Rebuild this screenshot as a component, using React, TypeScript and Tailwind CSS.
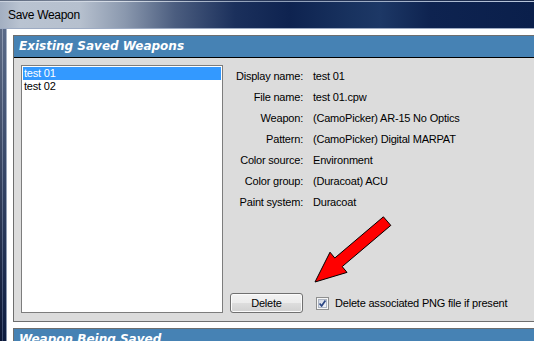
const rows: [string, string][] = [
  ["Display name:", "test 01"],
  ["File name:", "test 01.cpw"],
  ["Weapon:", "(CamoPicker) AR-15 No Optics"],
  ["Pattern:", "(CamoPicker) Digital MARPAT"],
  ["Color source:", "Environment"],
  ["Color group:", "(Duracoat) ACU"],
  ["Paint system:", "Duracoat"],
];

function CheckBox() {
  return (
    <svg width="13" height="13" viewBox="0 0 13 13" className="shrink-0">
      <defs>
        <linearGradient id="cbg" x1="0" y1="0" x2="1" y2="1">
          <stop offset="0" stopColor="#cfd6e2" />
          <stop offset="1" stopColor="#f4f6fa" />
        </linearGradient>
      </defs>
      <rect x="0.5" y="0.5" width="12" height="12" fill="#f6f6f6" stroke="#8e8f8f" />
      <rect x="2.5" y="2.5" width="8" height="8" fill="url(#cbg)" stroke="#aeb6c4" />
      <path d="M3.6 6.4 L5.6 9 L9.4 3.4" stroke="#2b4684" strokeWidth="1.7" fill="none" strokeLinejoin="round" />
    </svg>
  );
}

function Header({ title }: { title: string }) {
  return (
    <div className="h-[22px] shrink-0 bg-[#4682b4] border-b border-black pl-[5px] font-['DejaVu_Sans',sans-serif] text-[12px] leading-[21px] font-bold italic text-white whitespace-nowrap">
      {title}
    </div>
  );
}

export default function App() {
  return (
    <div className="relative w-[534px] h-[341px] overflow-hidden flex flex-col bg-[#0b1c42] font-['Liberation_Sans',Arial,sans-serif]">
      {/* Title bar */}
      <div className="h-[29px] shrink-0 flex flex-col">
        <div className="h-[1px] bg-[linear-gradient(90deg,#5f6b80_0px,#7d889b_90px,#2a3a5c_200px,#1a2a4c_534px)]" />
        <div className="h-[1px] bg-[linear-gradient(90deg,#c9d1dd_0px,#d5dce6_120px,#8a9ab5_260px,#b8c6dc_534px)]" />
        <div className="flex-1 flex items-center pl-[8px] bg-[linear-gradient(90deg,#a3afc1_0px,#b9c3d1_20px,#b6c0ce_80px,#8a98ae_125px,#4b5d7f_175px,#1b305c_235px,#0e2350_290px,#18325f_350px,#1d3866_380px,#0e2350_430px,#0a1f4b_534px)]">
          <span className="text-[12px] tracking-[-0.3px] text-black">Save Weapon</span>
        </div>
        <div className="h-[1px] bg-[#9dabc3]" />
      </div>

      {/* Body */}
      <div className="flex flex-1 min-h-0">
        <div className="w-[2px] bg-[linear-gradient(to_bottom,#5d6b85,#0a1533)]" />
        <div className="w-[1px] bg-[linear-gradient(to_bottom,#8e9ab0,#3b4a6c)]" />
        <div className="w-[3px] bg-[linear-gradient(to_bottom,#5a6a88,#0b1a3e)]" />
        <div className="w-[1px] bg-[linear-gradient(to_bottom,#a7b3c6,#8592aa)]" />

        <div className="flex-1 bg-white pl-[6px] pt-[6px] flex flex-col">
          {/* Panel 1 */}
          <div className="shrink-0 border-l border-t border-b border-[#6e6e6e] flex flex-col">
            <Header title="Existing Saved Weapons" />
            <div className="h-[263px] bg-[#dcdcdc] flex pl-[7px] pt-[7px]">
              <div className="w-[202px] h-[248px] shrink-0 border border-[#7d7d7d] bg-white p-[1px] text-[11px] tracking-[-0.2px] leading-[13px]">
                <div className="h-[13px] bg-[#3399ff] text-white pl-[1px]">test 01</div>
                <div className="h-[13px] text-black pl-[1px]">test 02</div>
              </div>
              <div className="flex-1 h-[248px] pl-[7px] flex flex-col justify-between text-[11px] tracking-[-0.2px] text-black">
                <div className="grid grid-cols-[73px_1fr] gap-x-[10px] pt-[1px] leading-[21px]">
                  {rows.map(([k, v]) => (
                    <div key={k} className="contents">
                      <div className="text-right whitespace-nowrap">{k}</div>
                      <div className="whitespace-nowrap">{v}</div>
                    </div>
                  ))}
                </div>
                <div className="flex items-center h-[20px]">
                  <div className="w-[73px] h-[20px] shrink-0 rounded-[3px] border border-[#707070] bg-[linear-gradient(to_bottom,#f3f3f3_0%,#ececec_48%,#dddddd_52%,#d0d0d0_100%)] shadow-[inset_0_0_0_1px_#fbfbfb] flex items-center justify-center leading-none">
                    Delete
                  </div>
                  <div className="ml-[13px]">
                    <CheckBox />
                  </div>
                  <span className="ml-[6px] whitespace-nowrap">Delete associated PNG file if present</span>
                </div>
              </div>
            </div>
          </div>

          {/* Panel 2 */}
          <div className="mt-[6px] flex-1 border-l border-t border-[#6e6e6e] flex flex-col">
            <Header title="Weapon Being Saved" />
          </div>
        </div>
      </div>

      {/* Red arrow annotation */}
      <svg className="absolute left-0 top-0 pointer-events-none" width="534" height="341" viewBox="0 0 534 341">
        <polygon
          points="383.4,216.8 390.8,225.4 342.2,266.6 347,272.4 315,282 330,252.2 334.8,258"
          fill="#ff0000"
          stroke="#000000"
          strokeWidth="1"
          strokeLinejoin="miter"
        />
      </svg>
    </div>
  );
}
